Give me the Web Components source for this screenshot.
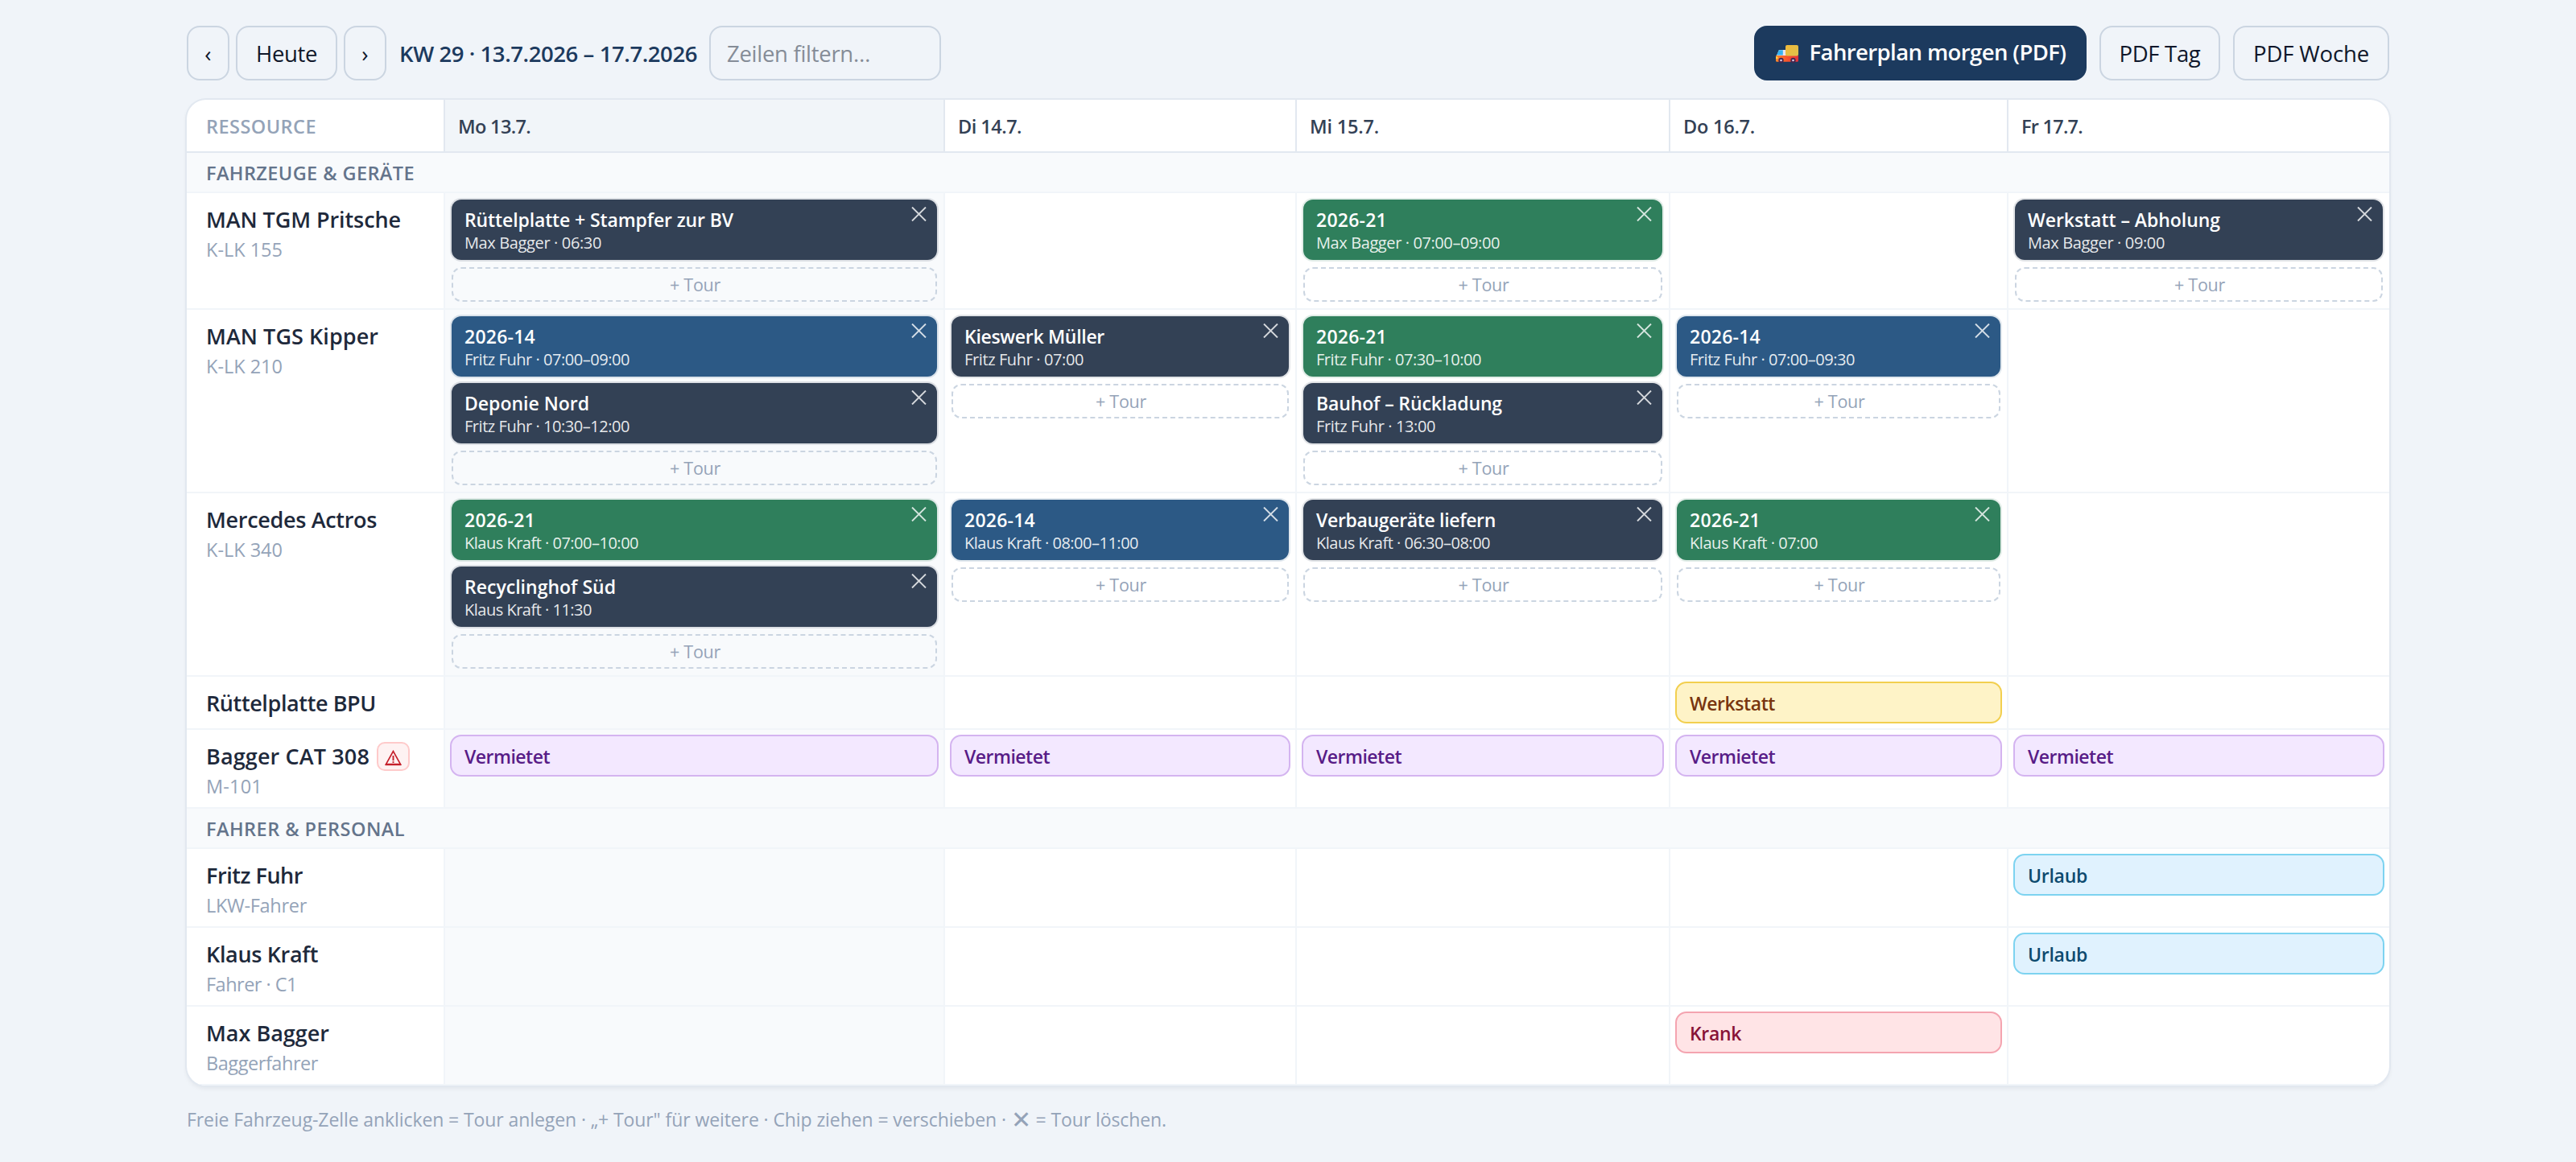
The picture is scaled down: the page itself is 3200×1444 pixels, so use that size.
<!DOCTYPE html>
<html lang="de">
<head>
<meta charset="utf-8">
<title>Disposition KW 29</title>
<style>
    body {
        margin: 0;
        background: #f0f4f9;
        color: #1e293b;
        font-family: "Open Sans", "Noto Sans", sans-serif;
    }
</style>
</head>
<body>
<plan-page></plan-page>
<script>
// base: puts css + markup in an open shadow root
class PlanElement extends HTMLElement {
    constructor() {
        super();
        this.attachShadow({ mode: 'open' });
    }
    render(css, html) {
        this.shadowRoot.innerHTML = `<style>*{box-sizing:border-box}${css}</style>${html}`;
    }
    query(s) {
        return this.shadowRoot.querySelector(s);
    }
}

// one line of text, tracked so that it fills the given width
class FitText extends PlanElement {
    connectedCallback() {
        this.render(`
            :host { display: inline-block; white-space: pre; }
            span { display: inline-block; }
        `, `<span><slot></slot></span>`);
        const w = Number(this.getAttribute('w'));
        if (!w) return;
        const span = this.query('span');
        const n = [...this.textContent].length;
        const diff = w - span.getBoundingClientRect().width;
        span.style.letterSpacing = (diff / n).toFixed(3) + 'px';
    }
}
customElements.define('fit-text', FitText);

class PlanButton extends PlanElement {
    connectedCallback() {
        this.render(`
            :host { display: block; }
            button {
                display: flex;
                align-items: center;
                justify-content: center;
                width: 100%;
                height: 68px;
                padding: 2px 0 0;
                border: 2px solid #cbd5e1;
                border-radius: 16px;
                background: transparent;
                color: #0f172a;
                font: inherit;
                font-size: 27.5px;
                line-height: 38px;
            }
            :host([primary]) button {
                border-color: #1c3a5e;
                background: #1c3a5e;
                color: #fff;
                font-weight: 600;
                gap: 14px;
                padding: 0 0 2px 1px;
            }
        `, `<button><slot></slot></button>`);
    }
}
customElements.define('plan-button', PlanButton);

class TruckIcon extends PlanElement {
    connectedCallback() {
        this.render(`
            :host { display: block; width: 28px; height: 23px; margin-top: 4px; }
            svg { display: block; }
        `, `<svg width="28" height="23" viewBox="0 0 28 23">
            <defs>
                <linearGradient id="c" x1="0" y1="0" x2="1" y2="1"><stop offset="0" stop-color="#f0b93a"/><stop offset="1" stop-color="#dcc04c"/></linearGradient>
                <linearGradient id="r" x1="0" y1="0" x2="1" y2="0"><stop offset="0" stop-color="#ff8a2a"/><stop offset=".5" stop-color="#f8542c"/><stop offset="1" stop-color="#e02f3c"/></linearGradient>
            </defs>
            <path d="M4 6h9v8H0.500z" fill="#e8e4f0"/>
            <path d="M3.800 6.200h5v6.400H1.200z" fill="#35b4f2"/>
            <path d="M0 13h28v6.200a1.500 1.500 0 0 1-1.500 1.500h-25A1.500 1.500 0 0 1 0 19.200z" fill="url(#r)"/>
            <rect x="12" y="0" width="16" height="13.500" rx="2" fill="url(#c)"/>
            <rect x="0" y="14.500" width="2.500" height="2.500" rx="1" fill="#ffd84a"/>
            <circle cx="6.500" cy="19" r="3.200" fill="#45264f"/><circle cx="6.500" cy="19" r="1.300" fill="#d9cfe6"/>
            <circle cx="21.500" cy="19" r="3.200" fill="#45264f"/><circle cx="21.500" cy="19" r="1.300" fill="#d9cfe6"/>
        </svg>`);
    }
}
customElements.define('truck-icon', TruckIcon);

class PlanToolbar extends PlanElement {
    connectedCallback() {
        this.render(`
            :host { display: flex; justify-content: space-between; height: 68px; margin-bottom: 24px; }
            div { display: flex; align-items: center; }
            .left plan-button { margin-right: 8px; }
            .arrow { width: 53px; }
            .today { width: 126px; }
            .range {
                width: 393px;
                padding: 2px 0 0 8px;
                color: #1c3a5e;
                font-size: 27.5px;
                font-weight: 590;
                line-height: 38px;
            }
            .filter {
                width: 288px;
                height: 68px;
                padding: 2px 20px 0;
                border: 2px solid #cbd5e1;
                border-radius: 16px;
                color: #858c97;
                font-size: 27.5px;
                line-height: 38px;
            }
            .right { gap: 16px; }
            .primary { width: 413px; }
            .day { width: 150px; }
            .week { width: 194px; }
        `, `
        <div class="left">
            <plan-button class="arrow">‹</plan-button>
            <plan-button class="today"><fit-text w="76">Heute</fit-text></plan-button>
            <plan-button class="arrow">›</plan-button>
            <div class="range"><fit-text w="370">KW 29 · 13.7.2026 – 17.7.2026</fit-text></div>
            <div class="filter"><fit-text w="178">Zeilen filtern…</fit-text></div>
        </div>
        <div class="right">
            <plan-button class="primary" primary><truck-icon></truck-icon><fit-text w="319">Fahrerplan morgen (PDF)</fit-text></plan-button>
            <plan-button class="day"><fit-text w="101">PDF Tag</fit-text></plan-button>
            <plan-button class="week"><fit-text w="144">PDF Woche</fit-text></plan-button>
        </div>`);
    }
}
customElements.define('plan-toolbar', PlanToolbar);

class PlanHead extends PlanElement {
    connectedCallback() {
        this.render(`
            :host {
                display: grid;
                grid-template-columns: var(--cols);
                height: 66px;
                border-bottom: 2px solid #e2e8f0;
                color: #334155;
                font-size: 23.5px;
                font-weight: 570;
                line-height: 32px;
            }
            div { padding: 17px 0 0 16px; border-left: 2px solid #e2e8f0; }
            div.first { padding-left: 24px; border-left: 0; color: #94a3b8; }
            div.today { background: #f1f5f9; }
        `, `
        <div class="first"><fit-text w="137">RESSOURCE</fit-text></div>
        <div class="today"><fit-text w="90">Mo 13.7.</fit-text></div>
        <div><fit-text w="79">Di 14.7.</fit-text></div>
        <div><fit-text w="86">Mi 15.7.</fit-text></div>
        <div><fit-text w="89">Do 16.7.</fit-text></div>
        <div><fit-text w="76">Fr 17.7.</fit-text></div>`);
    }
}
customElements.define('plan-head', PlanHead);

class PlanGroup extends PlanElement {
    connectedCallback() {
        this.render(`
            :host {
                display: block;
                height: 50px;
                padding: 9px 24px 0;
                border-bottom: 2px solid #f1f5f9;
                background: #f8fafc;
                color: #64748b;
                font-size: 23.5px;
                font-weight: 570;
                line-height: 32px;
            }
        `, `<slot></slot>`);
    }
}
customElements.define('plan-group', PlanGroup);

class PlanRow extends PlanElement {
    connectedCallback() {
        this.render(`
            :host {
                display: grid;
                grid-template-columns: var(--cols);
                min-height: 66px;
                border-bottom: 2px solid #f1f5f9;
            }
        `, `<slot></slot>`);
    }
}
customElements.define('plan-row', PlanRow);

class PlanResource extends PlanElement {
    connectedCallback() {
        this.render(`
            :host { display: block; padding: 14px 0 11px 24px; }
            .name { display: flex; gap: 9px; height: 37px; font-size: 27px; font-weight: 580; line-height: 37px; color: #1e293b; }
            .sub { margin-top: 5px; font-size: 23.5px; line-height: 29px; color: #94a3b8; }
            ::slotted(warn-badge) { margin-top: 1px; }
        `, `
        <div class="name"><slot name="name"></slot></div>
        <div class="sub"><slot></slot></div>`);
        if (!this.hasAttribute('sub')) this.query('.sub').remove();
    }
}
customElements.define('plan-resource', PlanResource);

class WarnBadge extends PlanElement {
    connectedCallback() {
        this.render(`
            :host {
                display: flex;
                justify-content: center;
                box-sizing: border-box;
                width: 41px;
                height: 36px;
                padding-top: 8px;
                border: 2px solid #fecaca;
                border-radius: 10px;
                background: #fef2f2;
            }
        `, `<svg width="21" height="20" viewBox="0 0 21 20" fill="none" stroke="#c5202b">
            <path d="M10.500 1.500 1.200 18.300h18.600z" stroke-width="1.600"/>
            <path d="M1 18h19" stroke-width="2.400"/>
            <path d="M10.500 7v6.200M10.500 14.300v1.800" stroke-width="1.900"/>
        </svg>`);
    }
}
customElements.define('warn-badge', WarnBadge);

class PlanCell extends PlanElement {
    connectedCallback() {
        this.render(`
            :host { display: block; padding: 8px; border-left: 2px solid #f1f5f9; }
            :host([state]) { padding: 6px; }
            :host([today]) { background: #f8fafc; }
        `, `<slot></slot>`);
    }
}
customElements.define('plan-cell', PlanCell);

class TourChip extends PlanElement {
    connectedCallback() {
        this.render(`
            :host {
                display: block;
                position: relative;
                box-sizing: border-box;
                height: 75px;
                margin-bottom: 8px;
                padding: 10px 16px 8px;
                border-radius: 12px;
                background: #334155;
                box-shadow: 0 0 0 2px rgba(51, 65, 85, .14);
                color: #fff;
            }
            :host([color=blue]) { background: #2c5985; box-shadow: 0 0 0 2px rgba(44, 89, 133, .14); }
            :host([color=green]) { background: #2f7f5c; box-shadow: 0 0 0 2px rgba(47, 127, 92, .14); }
            .title { height: 30px; font-size: 23px; font-weight: 600; line-height: 30px; }
            .info { height: 26px; margin-top: 1px; font-size: 20px; line-height: 26px; color: rgba(255, 255, 255, .9); }
            svg { position: absolute; top: 9px; right: 13px; }
        `, `
        <div class="title"><slot name="title"></slot></div>
        <div class="info"><slot></slot></div>
        <svg width="19" height="18" viewBox="0 0 19 18" stroke="#fff" stroke-opacity=".8" stroke-width="1.900"><path d="M1 .500 18 17.500M18 .500 1 17.500"/></svg>`);
    }
}
customElements.define('tour-chip', TourChip);

class TourAdd extends PlanElement {
    connectedCallback() {
        this.render(`
            :host {
                display: block;
                box-sizing: border-box;
                height: 43px;
                margin-top: 9px;
                padding-left: 2px;
                border: 2px dashed #cbd5e1;
                border-radius: 12px;
                color: #94a3b8;
                font-size: 21.5px;
                line-height: 39px;
                text-align: center;
            }
        `, `<fit-text w="63">+ Tour</fit-text>`);
    }
}
customElements.define('tour-add', TourAdd);

class StateBar extends PlanElement {
    connectedCallback() {
        this.render(`
            :host {
                display: block;
                box-sizing: border-box;
                height: 52px;
                padding: 9px 16px 0;
                border: 2px solid #d4b4f0;
                border-radius: 14px;
                background: #f3e8ff;
                color: #581c87;
                font-size: 23px;
                font-weight: 590;
                line-height: 32px;
            }
            :host([kind=shop]) { border-color: #f2cf4f; background: #fef3c7; color: #78350f; }
            :host([kind=leave]) { border-color: #7dd3f0; background: #e0f2fe; color: #0c4a6e; }
            :host([kind=sick]) { border-color: #f4a4b0; background: #ffe4e6; color: #881337; }
        `, `<slot></slot>`);
    }
}
customElements.define('state-bar', StateBar);

// tours: [title, width, info, width, color]
const T = {
    r1: ['MAN TGM Pritsche', 242, 'K-LK 155', 95, [
        [['Rüttelplatte + Stampfer zur BV', 334, 'Max Bagger · 06:30', 170]],
        null,
        [['2026-21', 88, 'Max Bagger · 07:00–09:00', 228, 'green']],
        null,
        [['Werkstatt – Abholung', 239, 'Max Bagger · 09:00', 170]]
    ]],
    r2: ['MAN TGS Kipper', 214, 'K-LK 210', 95, [
        [['2026-14', 88, 'Fritz Fuhr · 07:00–09:00', 205, 'blue'], ['Deponie Nord', 155, 'Fritz Fuhr · 10:30–12:00', 205]],
        [['Kieswerk Müller', 174, 'Fritz Fuhr · 07:00', 148]],
        [['2026-21', 88, 'Fritz Fuhr · 07:30–10:00', 205, 'green'], ['Bauhof – Rückladung', 231, 'Fritz Fuhr · 13:00', 148]],
        [['2026-14', 88, 'Fritz Fuhr · 07:00–09:30', 205, 'blue']],
        null
    ]],
    r3: ['Mercedes Actros', 212, 'K-LK 340', 95, [
        [['2026-21', 88, 'Klaus Kraft · 07:00–10:00', 216, 'green'], ['Recyclinghof Süd', 188, 'Klaus Kraft · 11:30', 158]],
        [['2026-14', 88, 'Klaus Kraft · 08:00–11:00', 216, 'blue']],
        [['Verbaugeräte liefern', 223, 'Klaus Kraft · 06:30–08:00', 216]],
        [['2026-21', 88, 'Klaus Kraft · 07:00', 159, 'green']],
        null
    ]],
    r4: ['Rüttelplatte BPU', 211, '', 0, [null, null, null, 'shop', null]],
    r5: ['Bagger CAT 308', 203, 'M-101', 70, ['rent', 'rent', 'rent', 'rent', 'rent'], true],
    d1: ['Fritz Fuhr', 120, 'LKW-Fahrer', 125, [null, null, null, null, 'leave']],
    d2: ['Klaus Kraft', 139, 'Fahrer · C1', 113, [null, null, null, null, 'leave']],
    d3: ['Max Bagger', 153, 'Baggerfahrer', 139, [null, null, null, 'sick', null]]
};
const STATES = {
    shop: ['Werkstatt', 106],
    rent: ['Vermietet', 106],
    leave: ['Urlaub', 74],
    sick: ['Krank', 64]
};

function cell(c, i) {
    const today = i === 0 ? ' today' : '';
    if (c === null) return `<plan-cell${today}></plan-cell>`;
    if (typeof c === 'string') {
        const [text, w] = STATES[c];
        return `<plan-cell state${today}><state-bar kind="${c}"><fit-text w="${w}">${text}</fit-text></state-bar></plan-cell>`;
    }
    const chips = c.map(([title, tw, info, iw, color]) => `<tour-chip color="${color || 'dark'}"><fit-text slot="title" w="${tw}">${title}</fit-text><fit-text w="${iw}">${info}</fit-text></tour-chip>`);
    return `<plan-cell${today}>${chips.join('')}<tour-add></tour-add></plan-cell>`;
}

function row([name, nw, sub, sw, cells, warn]) {
    return `<plan-row>
        <plan-resource ${sub ? 'sub' : ''}><fit-text slot="name" w="${nw}">${name}</fit-text>${warn ? '<warn-badge slot="name"></warn-badge>' : ''}${sub ? `<fit-text w="${sw}">${sub}</fit-text>` : ''}</plan-resource>
        ${cells.map(cell).join('')}
    </plan-row>`;
}

class PlanBoard extends PlanElement {
    connectedCallback() {
        this.render(`
            :host {
                --cols: 319px 621px 437px 464px 420px 475px;
                display: block;
                overflow: hidden;
                border-radius: 24px;
                background: #fff;
                box-shadow: 0 0 0 2px #e2e8f0, 0 3px 6px rgba(15, 23, 42, .08);
            }
        `, `
        <plan-head></plan-head>
        <plan-group><fit-text w="259">FAHRZEUGE &amp; GERÄTE</fit-text></plan-group>
        ${[T.r1, T.r2, T.r3, T.r4, T.r5].map(row).join('')}
        <plan-group><fit-text w="247">FAHRER &amp; PERSONAL</fit-text></plan-group>
        ${[T.d1, T.d2, T.d3].map(row).join('')}`);
    }
}
customElements.define('plan-board', PlanBoard);

class PlanPage extends PlanElement {
    connectedCallback() {
        this.render(`
            :host { display: block; width: 2736px; margin: 0 auto; padding-top: 32px; }
            p { margin: 26px 0 0; height: 32px; font-size: 23px; line-height: 32px; color: #94a3b8; }
            .x { font-size: 30px; line-height: 0; vertical-align: -2px; }
        `, `
        <plan-toolbar></plan-toolbar>
        <plan-board></plan-board>
        <p><fit-text w="1217">Freie Fahrzeug-Zelle anklicken = Tour anlegen · „+ Tour" für weitere · Chip ziehen = verschieben · <span class="x">✕</span> = Tour löschen.</fit-text></p>`);
    }
}
customElements.define('plan-page', PlanPage);
</script>
</body>
</html>
